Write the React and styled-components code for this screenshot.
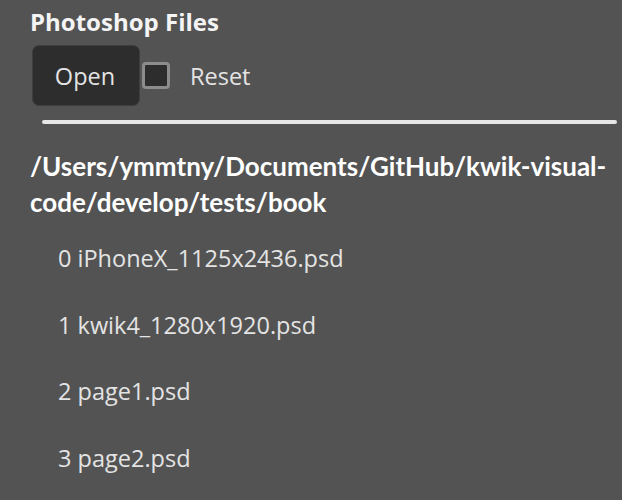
import React from "react";
import styled, { createGlobalStyle } from "styled-components";

const Global = createGlobalStyle`
  html, body { margin: 0; padding: 0; background: #535353; }
  body { font-family: "Open Sans", "Noto Sans", sans-serif; -webkit-font-smoothing: antialiased; }
`;

const Panel = styled.div`
  width: 622px;
  height: 500px;
  box-sizing: border-box;
  padding: 0 5px 0 30px;
  overflow: hidden;
  background: #535353;
`;

const Title = styled.h2`
  margin: 0;
  padding-top: 7px;
  font-size: 24px;
  line-height: 30px;
  font-weight: 700;
  color: #f4f4f4;
`;

const Toolbar = styled.div`
  display: flex;
  align-items: center;
  margin-top: 8px;
  margin-left: 2px;
`;

const Button = styled.button`
  width: 108px;
  height: 61px;
  box-sizing: border-box;
  background: #2d2d2d;
  border: 1px solid #3e3e3e;
  border-radius: 7px;
  color: #e4e4e4;
  font-family: inherit;
  font-size: 23.5px;
  padding: 0 2px 0 0;
`;

const Check = styled.span`
  width: 28px;
  height: 27px;
  box-sizing: border-box;
  margin-left: 2px;
  border: 3px solid #8c8c8c;
  border-radius: 4px;
  background: #2d2d2d;
`;

const Label = styled.span`
  margin-left: 20px;
  color: #e4e4e4;
  font-size: 23.5px;
`;

const Divider = styled.hr`
  margin: 14px 0 0 12px;
  border: 0;
  height: 4px;
  border-radius: 2px;
  background: #e6e6e6;
`;

const Path = styled.div`
  margin-top: 24px;
  font-family: Lato, "Open Sans", sans-serif;
  font-size: 26px;
  line-height: 36px;
  font-weight: 700;
  color: #ffffff;
`;

const List = styled.ul`
  list-style: none;
  margin: 5px 0 0;
  padding: 0 0 0 28px;
`;

const Item = styled.li`
  font-size: 23.5px;
  line-height: 66.5px;
  color: #e4e4e4;
`;

const files = ["iPhoneX_1125x2436.psd", "kwik4_1280x1920.psd", "page1.psd", "page2.psd"];

export default function App() {
  return (
    <Panel>
      <Global />
      <Title>Photoshop Files</Title>
      <Toolbar>
        <Button>Open</Button>
        <Check />
        <Label>Reset</Label>
      </Toolbar>
      <Divider />
      <Path>/Users/ymmtny/Documents/GitHub/kwik-visual-code/develop/tests/book</Path>
      <List>
        {files.map((f, i) => (
          <Item key={f}>{i} {f}</Item>
        ))}
      </List>
    </Panel>
  );
}
